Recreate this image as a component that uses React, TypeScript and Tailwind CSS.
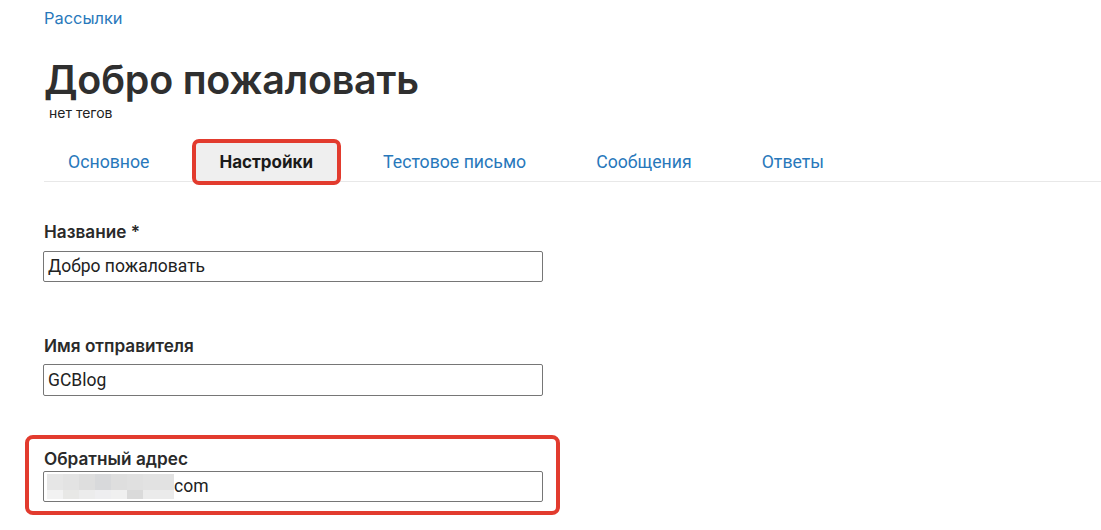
import React from "react";

const tabs = ["Основное", "Настройки", "Тестовое письмо", "Сообщения", "Ответы"];

const topRow = ["#e6e6e6", "#e3e3e3", "#dedede", "#d8d9db", "#dedede", "#e0e0e0", "#e2e2e2"];
const botRow = ["#f2f2f2", "#e8e8e6", "#ececec", "#eeeef0", "#f0f0f0", "#dadada", "#ebebeb"];
const widths = [16, 16, 16, 16, 16, 16, 31];

function Blur() {
  return (
    <div className="flex flex-col">
      <div className="flex">
        {topRow.map((c, i) => (
          <div key={i} className="h-[16px]" style={{ width: widths[i], background: c }} />
        ))}
      </div>
      <div className="flex">
        {botRow.map((c, i) => (
          <div key={i} className="h-[9px]" style={{ width: widths[i], background: c }} />
        ))}
      </div>
    </div>
  );
}

export default function App() {
  const sans = "font-['Inter','Noto_Sans',sans-serif]";
  const rob = "font-['Roboto','Liberation_Sans',sans-serif]";
  return (
    <div className={`min-h-[530px] w-[1101px] bg-white overflow-hidden ${sans}`}>
      <div className="pl-[44px]">
        <div className={`pt-[6px] text-[16.4px] leading-[24px] text-[#2878bb] ${sans}`}>Рассылки</div>
        <h1 className="mt-[26px] text-[39.4px] leading-[48px] font-semibold text-[#2f2f2f] tracking-[-0.2px]">
          Добро пожаловать
        </h1>
        <div className="mt-[1px] pl-[5px] text-[14px] leading-[16px] text-[#222]">нет тегов</div>

        <div className="mt-[22px] flex gap-[22px] border-b border-[#e8e8e8]">
          {tabs.map((t) => {
            const active = t === "Настройки";
            return (
              <div
                key={t}
                className={
                  active
                    ? "px-6 py-[9px] text-[17px] leading-[20px] font-bold text-[#1a1a1a] bg-[#efefef] rounded-[3px] outline-4 outline-solid outline-[#e23b2e] " + sans
                    : "px-6 py-[9px] text-[17.7px] leading-[20px] text-[#2878bb] " + rob
                }
              >
                {t}
              </div>
            );
          })}
        </div>

        <div className="mt-[38px] w-[500px] -ml-[1px]">
          <div className="pl-[1px] text-[17.2px] leading-[24px] font-semibold text-[#2a2a2a]">Название *</div>
          <div className={`mt-[7px] h-[31px] border border-[#767676] rounded-[2px] px-[4px] flex items-center text-[17.5px] text-[#222] ${rob}`}>
            Добро пожаловать
          </div>

          <div className="mt-[52px] pl-[1px] text-[17.2px] leading-[24px] font-semibold text-[#2a2a2a]">Имя отправителя</div>
          <div className={`mt-[6px] h-[32px] border border-[#767676] rounded-[2px] px-[4px] flex items-center text-[17.5px] text-[#222] ${rob}`}>
            GCBlog
          </div>
        </div>

        <div className="mt-[39px] -ml-[19px] w-[535px] border-4 border-[#e23b2e] rounded-[8px] pl-[14px] pr-[13px] pt-[8px] pb-[9px]">
          <div className="pl-[1px] text-[17.2px] leading-[24px] font-semibold text-[#2a2a2a]">Обратный адрес</div>
          <div className={`h-[31px] border border-[#767676] rounded-[2px] pl-[3px] flex items-center text-[17.5px] text-[#222] ${rob}`}>
            <Blur />
            <span>com</span>
          </div>
        </div>
      </div>
    </div>
  );
}
